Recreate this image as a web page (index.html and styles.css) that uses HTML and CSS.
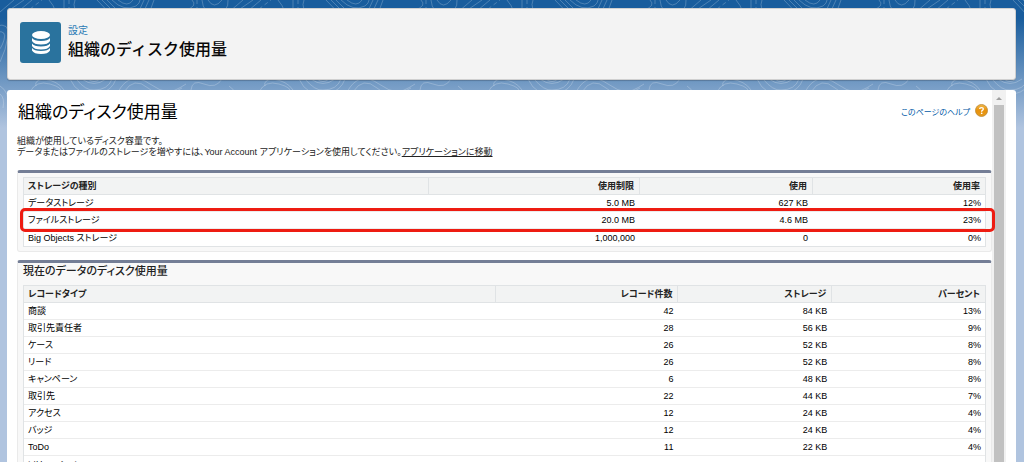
FILE: index.html
```html
<!DOCTYPE html>
<html lang="ja">
<head>
<meta charset="utf-8">
<meta name="viewport" content="width=device-width, initial-scale=1">
<title>組織のディスク使用量</title>
<link rel="stylesheet" href="styles.css">
</head>
<body>
<svg class="backdrop" aria-hidden="true">
  <defs>
    <pattern id="contours" width="229" height="128" patternUnits="userSpaceOnUse">
      <g fill="none" stroke="#fff" stroke-opacity=".22" stroke-width="1">
        <path d="M0 12 L14 0 M8 11 L24 0 M20 10 L32 0"/>
        <path d="M49 0 Q54 6 55 10 M97 0 Q103 6 110 14 M102 0 L116 14 M107 0 L121 14 M112 0 Q124 12 136 6 Q140 3 140 0 M118 0 Q128 8 133 0"/>
        <path d="M64 0 V10 M75 0 Q73 4 75 10 M144 0 L139 11 M149 0 L144 11 M154 0 L150 11 M186 10 Q198 6 192 0 M202 0 Q203 14 216 14 Q229 12 228 0 M208 0 Q214 10 222 0"/>
        <path d="M69 0 V10 M30 9 L42 0 M197 0 V10" stroke-dasharray="4 3"/>
        <path d="M-4 26 Q10 22 8 36 T0 62 M-3 32 Q7 30 4 40 T-4 52"/>
        <path d="M30 92 Q36 80 50 84 T60 92 M36 86 Q34 80 44 79 Q58 81 64 90 M76 79 Q86 91 94 90 Q108 90 112 79 M82 79 Q94 88 106 79 M88 79 Q94 84 100 79 M70 79 Q78 97 98 94 Q112 91 116 79"/>
        <path d="M118 92 Q130 70 150 84 T182 88 M124 92 Q134 76 148 88 T186 84 M191 90 Q192 79 204 84 T222 79"/>
        <path d="M0 86 Q10 92 8 108 M0 94 Q5 98 3 108"/>
      </g>
    </pattern>
  </defs>
  <rect width="100%" height="128" fill="url(#contours)"/>
</svg>

<div class="page">
  <header class="page-header">
    <svg class="header-icon" viewBox="0 0 41 41" aria-hidden="true">
      <rect width="41" height="41" rx="3" fill="#2a739e"/>
      <g fill="#fff">
        <ellipse cx="21" cy="13" rx="9" ry="4"/>
        <path d="M12 16 Q14 19 21 19 T30 16 V19 Q28 22.500 21 22.500 T12 19Z"/>
        <path d="M12 21.500 Q14 24.500 21 24.500 T30 21.500 V24 Q28 27.500 21 27.500 T12 24Z"/>
        <path d="M12 26 Q14 29 21 29 T30 26 V28.500 Q28 32 21 32 T12 28.500Z"/>
      </g>
    </svg>
    <div>
      <p class="eyebrow">設定</p>
      <h1 class="header-title">組織のディスク使用量</h1>
    </div>
  </header>

  <main class="card">
    <div class="content">
      <div class="title-row">
        <h2 class="title">組織のディスク使用量</h2>
        <a class="help" href="#">このページのヘルプ
          <svg class="help-icon" viewBox="0 0 14 14" aria-hidden="true">
            <defs><linearGradient id="amber" x2="0" y2="1"><stop stop-color="#f2b84b"/><stop offset=".5" stop-color="#e8920c"/><stop offset="1" stop-color="#e59a1e"/></linearGradient></defs>
            <circle cx="7" cy="7" r="6.500" fill="url(#amber)" stroke="#b98531" stroke-width=".8"/>
            <path d="M5 5.500 Q5 3.800 7 3.800 T9 5.500 Q9 6.500 7.200 7.500 V8.300" fill="none" stroke="#fff" stroke-width="1.400"/>
            <circle cx="7.200" cy="10" r=".9" fill="#fff"/>
          </svg>
        </a>
      </div>
      <p class="intro">組織が使用しているディスク容量です。<br>データまたはファイルのストレージを増やすには、Your Account アプリケーションを使用してください。<a href="#">アプリケーションに移動</a></p>

      <section class="panel panel-plain">
        <table class="grid">
          <colgroup><col class="c-kind"><col class="c-limit"><col class="c-used"><col></colgroup>
          <thead><tr><th>ストレージの種別</th><th>使用制限</th><th>使用</th><th>使用率</th></tr></thead>
          <tbody>
            <tr><td>データストレージ</td><td>5.0 MB</td><td>627 KB</td><td>12%</td></tr>
            <tr class="marked"><td>ファイルストレージ</td><td>20.0 MB</td><td>4.6 MB</td><td>23%</td></tr>
            <tr><td>Big Objects ストレージ</td><td>1,000,000</td><td>0</td><td>0%</td></tr>
          </tbody>
        </table>
      </section>

      <section class="panel">
        <h3 class="panel-title">現在のデータのディスク使用量</h3>
        <table class="grid">
          <colgroup><col class="c-type"><col class="c-count"><col class="c-size"><col></colgroup>
          <thead><tr><th>レコードタイプ</th><th>レコード件数</th><th>ストレージ</th><th>パーセント</th></tr></thead>
          <tbody>
            <tr><td>商談</td><td>42</td><td>84 KB</td><td>13%</td></tr>
            <tr><td>取引先責任者</td><td>28</td><td>56 KB</td><td>9%</td></tr>
            <tr><td>ケース</td><td>26</td><td>52 KB</td><td>8%</td></tr>
            <tr><td>リード</td><td>26</td><td>52 KB</td><td>8%</td></tr>
            <tr><td>キャンペーン</td><td>6</td><td>48 KB</td><td>8%</td></tr>
            <tr><td>取引先</td><td>22</td><td>44 KB</td><td>7%</td></tr>
            <tr><td>アクセス</td><td>12</td><td>24 KB</td><td>4%</td></tr>
            <tr><td>バッジ</td><td>12</td><td>24 KB</td><td>4%</td></tr>
            <tr><td>ToDo</td><td>11</td><td>22 KB</td><td>4%</td></tr>
            <tr><td>ソリューション</td><td>10</td><td>20 KB</td><td>3%</td></tr>
          </tbody>
        </table>
      </section>
    </div>
    <div class="scrollbar" aria-hidden="true"><span class="arrow"></span><span class="thumb"></span></div>
  </main>
</div>
</body>
</html>
```

FILE: styles.css
```css
* { box-sizing: border-box; }

body {
  margin: 0;
  height: 100vh;
  overflow: hidden;
  background: linear-gradient(#195d9d 0, #195d9d 18px, #b0c4df 128px);
  color: #222;
  font-family: "Liberation Sans", "Noto Sans CJK JP", sans-serif;
  font-size: 9px;
}

h1, h2, h3, p { margin: 0; }

.backdrop {
  position: absolute;
  inset: 0;
  width: 100%;
  height: 128px;
}

.page {
  position: relative;
  display: flex;
  flex-direction: column;
  gap: 10px;
  height: 100%;
  padding: 8px 8px 0 7px;
}

.page-header {
  display: flex;
  gap: 7px;
  padding: 13px 12px 16px;
  background: #f3f3f3;
  border: 1px solid #d0d0d0;
  border-radius: 3px;
  box-shadow: 0 1px 1px rgba(0, 0, 0, .2);
}

.header-icon { width: 41px; height: 41px; }

.eyebrow {
  color: #2a7ab5;
  font-size: 10px;
  line-height: 18px;
}

.header-title {
  color: #080707;
  font-size: 16px;
  font-weight: 500;
  line-height: 20px;
}

.card {
  display: flex;
  flex: 1;
  min-height: 0;
  padding-right: 10px;
  overflow: hidden;
  background: #fff;
  border-radius: 3px 3px 0 0;
}

.content {
  flex: 1;
  padding: 11px 0 0 10px;
  font-feature-settings: "palt";
}

.title-row {
  display: flex;
  justify-content: space-between;
}

.title {
  padding-left: 1px;
  color: #000;
  font-size: 17px;
  font-weight: 400;
  line-height: 24px;
}

.help {
  display: flex;
  gap: 5px;
  padding-right: 4px;
  color: #015ba7;
  font-size: 8px;
  line-height: 24px;
  text-decoration: none;
}

.help-icon { width: 13px; height: 13px; margin-top: 3px; }

.intro {
  margin: 11px 0 12px;
  font-size: 9px;
  line-height: 11px;
}

.intro a { color: #222; }

.panel {
  margin-bottom: 8px;
  padding: 0 5px 4px;
  background: #f8f8f8;
  border: 1px solid #eaeaea;
  border-top: 3px solid #747e96;
  border-radius: 3px;
}

.panel-plain { padding-top: 4px; }

.panel-title {
  padding-bottom: 6px;
  color: #222;
  font-size: 11px;
  font-weight: 500;
  line-height: 16px;
}

.grid {
  width: 100%;
  table-layout: fixed;
  border: 1px solid #e0e3e5;
  border-collapse: separate;
  border-spacing: 0;
  background: #fff;
}

.grid th, .grid td {
  height: 17px;
  padding: 0 4px;
  border-bottom: 1px solid #ececec;
  line-height: 16px;
  text-align: right;
}

.grid th {
  padding-right: 5px;
  background: #f2f3f3;
  border-bottom-color: #e0e3e5;
  font-weight: 700;
}

.grid th + th { border-left: 1px solid #e0e3e5; }
.grid th:first-child, .grid td:first-child { text-align: left; }
.grid td { color: #000; }
.grid tr:last-child td { border-bottom: 0; }

.c-kind { width: 42%; }
.c-limit { width: 22%; }
.c-used { width: 18%; }
.c-type { width: 49%; }
.c-count { width: 19%; }
.c-size { width: 16%; }

.marked { position: relative; }

.marked td:first-child::after {
  content: "";
  position: absolute;
  inset: -4px -10px -3px -4px;
  border: 3px solid #ee1c12;
  border-radius: 5px;
}

.scrollbar {
  display: flex;
  flex-direction: column;
  align-items: center;
  width: 14px;
  background: #f1f1f1;
}

.arrow {
  margin: 7px 0 5px;
  border: 3px solid transparent;
  border-top: 0;
  border-bottom-color: #a0a0a0;
}

.thumb {
  flex: 1;
  width: 10px;
  background: #c1c1c1;
}
```
